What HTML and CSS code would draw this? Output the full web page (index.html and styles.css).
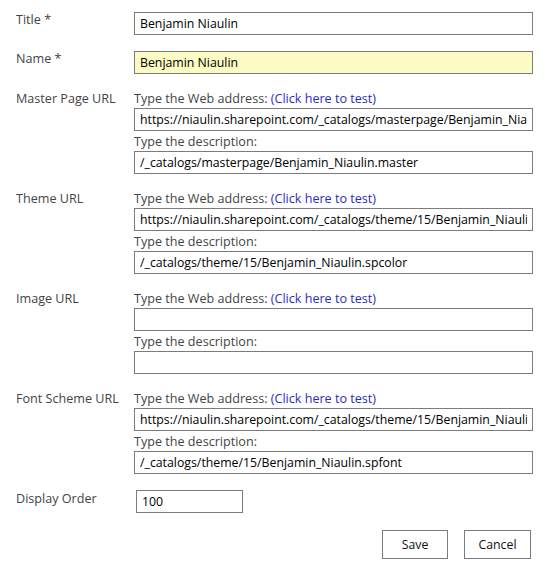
FILE: index.html
```html
<!DOCTYPE html>
<html>
<head>
<meta charset="utf-8">
<link rel="stylesheet" href="styles.css">
</head>
<body>
<form class="form">
  <div class="row row-simple">
    <div class="label">Title *</div>
    <div class="field"><input class="box" type="text" value="Benjamin Niaulin"></div>
  </div>
  <div class="row row-simple">
    <div class="label">Name *</div>
    <div class="field"><input class="box box-hl" type="text" value="Benjamin Niaulin"></div>
  </div>
  <div class="row">
    <div class="label">Master Page URL</div>
    <div class="field">
      <div class="hint">Type the Web address: <a class="link" href="#">(Click here to test)</a></div>
      <input class="box" type="text" value="https://niaulin.sharepoint.com/_catalogs/masterpage/Benjamin_Niaulin.master">
      <div class="hint hint-2">Type the description:</div>
      <input class="box" type="text" value="/_catalogs/masterpage/Benjamin_Niaulin.master">
    </div>
  </div>
  <div class="row">
    <div class="label">Theme URL</div>
    <div class="field">
      <div class="hint">Type the Web address: <a class="link" href="#">(Click here to test)</a></div>
      <input class="box" type="text" value="https://niaulin.sharepoint.com/_catalogs/theme/15/Benjamin_Niaulin.spcolor">
      <div class="hint hint-2">Type the description:</div>
      <input class="box" type="text" value="/_catalogs/theme/15/Benjamin_Niaulin.spcolor">
    </div>
  </div>
  <div class="row">
    <div class="label">Image URL</div>
    <div class="field">
      <div class="hint">Type the Web address: <a class="link" href="#">(Click here to test)</a></div>
      <input class="box" type="text" value="">
      <div class="hint hint-2">Type the description:</div>
      <input class="box" type="text" value="">
    </div>
  </div>
  <div class="row">
    <div class="label">Font Scheme URL</div>
    <div class="field">
      <div class="hint">Type the Web address: <a class="link" href="#">(Click here to test)</a></div>
      <input class="box" type="text" value="https://niaulin.sharepoint.com/_catalogs/theme/15/Benjamin_Niaulin.spfont">
      <div class="hint hint-2">Type the description:</div>
      <input class="box" type="text" value="/_catalogs/theme/15/Benjamin_Niaulin.spfont">
    </div>
  </div>
  <div class="row">
    <div class="label">Display Order</div>
    <div class="field"><input class="box box-small" type="text" value="100"></div>
  </div>
  <div class="actions">
    <button class="btn btn-save" type="button">Save</button>
    <button class="btn btn-cancel" type="button">Cancel</button>
  </div>
</form>
</body>
</html>
```

FILE: styles.css
```css
html, body {
  margin: 0;
  padding: 0;
  background: #ffffff;
}
body {
  font-family: "Open Sans", "Noto Sans", sans-serif;
  font-size: 12.6px;
  color: #444444;
}
.form {
  padding: 12px 12px 0 16px;
  display: flex;
  flex-direction: column;
  gap: 16px;
}
.row {
  display: grid;
  grid-template-columns: 118px 1fr;
  align-items: start;
}
.label {
  line-height: 18px;
  color: #444444;
}
.row-simple .label {
  margin-top: -1px;
}
.field {
  display: flex;
  flex-direction: column;
}
.hint {
  line-height: 18px;
  height: 18px;
  color: #444444;
}
.hint-2 {
  margin-top: 2px;
}
.link {
  color: #2b2bbf;
  text-decoration: none;
}
.box {
  display: block;
  box-sizing: border-box;
  width: 399px;
  height: 23px;
  margin: 0;
  padding: 0 5px;
  border: 1px solid #7c7c7c;
  background: #ffffff;
  font-family: "Open Sans", "Noto Sans", sans-serif;
  font-size: 12.3px;
  color: #000000;
  outline: none;
}
.box-hl {
  background: #fbfbc3;
}
.box-small {
  width: 107px;
  margin-left: 2px;
}
.actions {
  display: flex;
  justify-content: flex-end;
  gap: 16px;
  padding-right: 2px;
  margin-top: 1px;
}
.btn {
  box-sizing: border-box;
  height: 29px;
  border: 1px solid #7c7c7c;
  background: #ffffff;
  font-family: "Open Sans", "Noto Sans", sans-serif;
  font-size: 12.3px;
  color: #111111;
  padding: 0;
}
.btn-save {
  width: 66px;
}
.btn-cancel {
  width: 67px;
}
```
